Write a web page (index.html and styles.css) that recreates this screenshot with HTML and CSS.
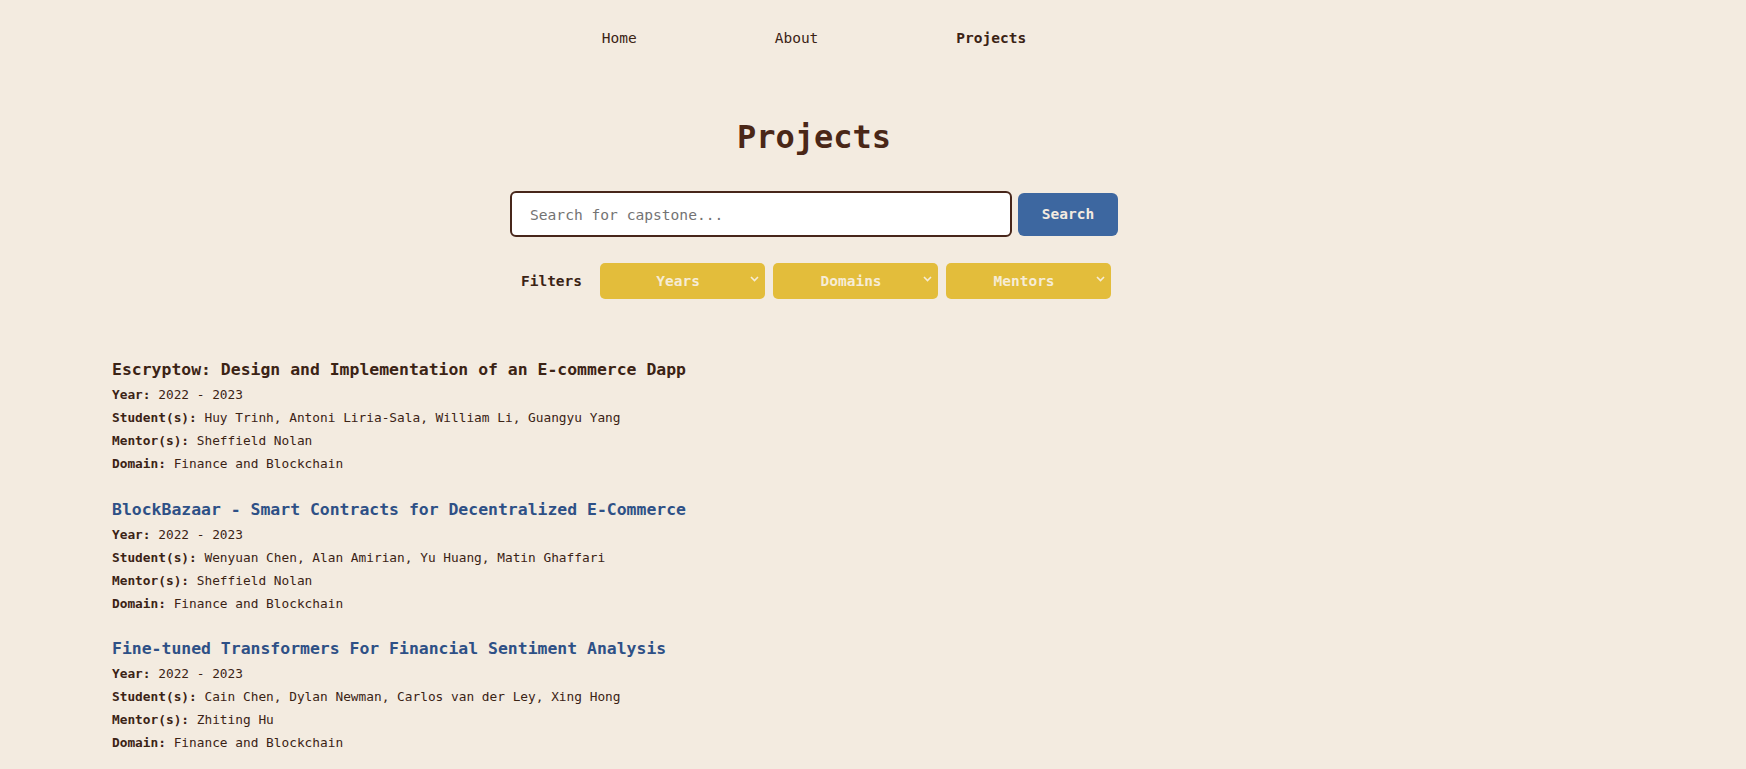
FILE: index.html
```html
<!DOCTYPE html>
<html lang="en">
<head>
<meta charset="utf-8">
<title>Projects</title>
<link rel="stylesheet" href="styles.css">
</head>
<body>
<div class="page">
  <nav class="nav">
    <a class="nav-link" href="#">Home</a>
    <a class="nav-link" href="#">About</a>
    <a class="nav-link active" href="#">Projects</a>
  </nav>

  <h1 class="heading">Projects</h1>

  <form class="search">
    <input class="search-input" type="text" placeholder="Search for capstone...">
    <button class="search-btn" type="button">Search</button>
  </form>

  <div class="filters">
    <span class="filters-label">Filters</span>
    <div class="dropdown"><span class="dropdown-text">Years</span><svg class="chev" width="9" height="6" viewBox="0 0 9 6"><path d="M1 1l3.5 3.5L8 1" fill="none" stroke="currentColor" stroke-width="1.6"/></svg></div>
    <div class="dropdown"><span class="dropdown-text">Domains</span><svg class="chev" width="9" height="6" viewBox="0 0 9 6"><path d="M1 1l3.5 3.5L8 1" fill="none" stroke="currentColor" stroke-width="1.6"/></svg></div>
    <div class="dropdown"><span class="dropdown-text">Mentors</span><svg class="chev" width="9" height="6" viewBox="0 0 9 6"><path d="M1 1l3.5 3.5L8 1" fill="none" stroke="currentColor" stroke-width="1.6"/></svg></div>
  </div>

  <section class="projects">
    <article class="project">
      <h3 class="project-title dark">Escryptow: Design and Implementation of an E-commerce Dapp</h3>
      <p class="detail"><b>Year:</b> 2022 - 2023</p>
      <p class="detail"><b>Student(s):</b> Huy Trinh, Antoni Liria-Sala, William Li, Guangyu Yang</p>
      <p class="detail"><b>Mentor(s):</b> Sheffield Nolan</p>
      <p class="detail"><b>Domain:</b> Finance and Blockchain</p>
    </article>
    <article class="project">
      <h3 class="project-title">BlockBazaar - Smart Contracts for Decentralized E-Commerce</h3>
      <p class="detail"><b>Year:</b> 2022 - 2023</p>
      <p class="detail"><b>Student(s):</b> Wenyuan Chen, Alan Amirian, Yu Huang, Matin Ghaffari</p>
      <p class="detail"><b>Mentor(s):</b> Sheffield Nolan</p>
      <p class="detail"><b>Domain:</b> Finance and Blockchain</p>
    </article>
    <article class="project">
      <h3 class="project-title">Fine-tuned Transformers For Financial Sentiment Analysis</h3>
      <p class="detail"><b>Year:</b> 2022 - 2023</p>
      <p class="detail"><b>Student(s):</b> Cain Chen, Dylan Newman, Carlos van der Ley, Xing Hong</p>
      <p class="detail"><b>Mentor(s):</b> Zhiting Hu</p>
      <p class="detail"><b>Domain:</b> Finance and Blockchain</p>
    </article>
  </section>
</div>
</body>
</html>
```

FILE: styles.css
```css
html, body {
  margin: 0;
  padding: 0;
  background: #f3ebe0;
}

body {
  font-family: "DejaVu Sans Mono", "Liberation Mono", monospace;
  color: #3b2315;
  overflow: hidden;
}

.page {
  margin: 0 230px 0 112px;
  display: flex;
  flex-direction: column;
}

.nav {
  display: flex;
  justify-content: center;
  gap: 138px;
  padding-top: 28px;
}

.nav-link {
  font-size: 14.5px;
  line-height: 20px;
  color: #3b2315;
  text-decoration: none;
}

.nav-link.active {
  font-weight: bold;
}

.heading {
  margin: 69px 0 0;
  font-size: 32px;
  line-height: 40px;
  font-weight: bold;
  text-align: center;
  color: #4a2717;
}

.search {
  display: flex;
  justify-content: center;
  align-items: center;
  gap: 6px;
  margin: 34px 0 0;
}

.search-input {
  box-sizing: border-box;
  width: 502px;
  height: 46px;
  padding: 0 17px 0 18px;
  border: 2px solid #47261a;
  border-radius: 6px;
  background: #ffffff;
  font-family: inherit;
  font-size: 14.6px;
  color: #3b2315;
  outline: none;
}

.search-input::placeholder {
  color: #737373;
}

.search-btn {
  box-sizing: border-box;
  width: 100px;
  height: 43px;
  border: none;
  border-radius: 6px;
  background: #3d67a0;
  color: #f3ebe0;
  font-family: inherit;
  font-size: 14.5px;
  font-weight: bold;
  cursor: pointer;
}

.filters {
  display: flex;
  justify-content: center;
  align-items: center;
  gap: 8px;
  margin: 26px 0 0 4px;
}

.filters-label {
  font-size: 14.5px;
  font-weight: bold;
  color: #3b2315;
  margin-right: 10px;
}

.dropdown {
  box-sizing: border-box;
  width: 165px;
  height: 36px;
  border-radius: 5px;
  background: #e3bd3b;
  color: #f6ecd6;
  display: flex;
  align-items: center;
  padding-right: 6px;
}

.dropdown-text {
  flex: 1;
  text-align: center;
  font-size: 14.5px;
  font-weight: bold;
  padding-left: 6px;
}

.chev {
  display: block;
  margin-top: -5px;
}

.projects {
  margin-top: 60px;
  display: flex;
  flex-direction: column;
}

.project {
  padding-bottom: 23.5px;
}

.project-title {
  margin: 0 0 2px;
  font-size: 16.45px;
  line-height: 22px;
  font-weight: bold;
  color: #2e5086;
}

.project-title.dark {
  color: #3b2315;
}

.detail {
  margin: 0;
  font-size: 12.8px;
  line-height: 23px;
  color: #3b2315;
}

.detail b {
  font-weight: bold;
}
```
